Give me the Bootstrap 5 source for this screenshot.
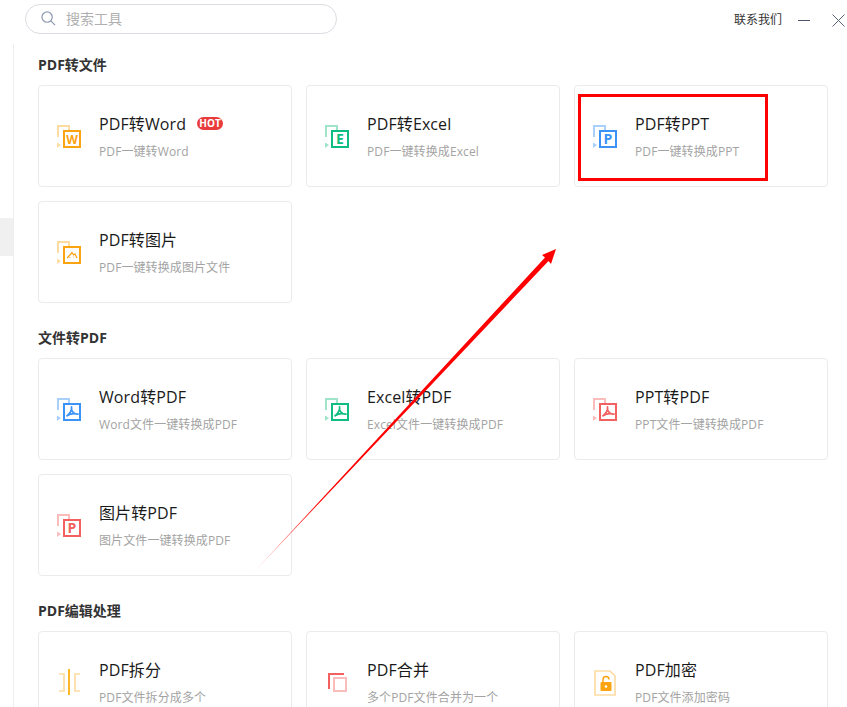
<!DOCTYPE html>
<html lang="zh-CN">
<head>
<meta charset="utf-8">
<title>PDF工具</title>
<link href="https://cdn.jsdelivr.net/npm/bootstrap@5.3.0/dist/css/bootstrap.min.css" rel="stylesheet">
<style>
html,body{height:707px;overflow:hidden;background:#fff}
body{font-family:"Open Sans","Noto Sans CJK SC",sans-serif;color:#222;position:relative}
.top-bar{height:44px;padding:4px 2px 0 25px}
.search-pill{width:312px;height:30px;border:1px solid #dcdce2;border-radius:15px;padding:0 0 1px 15px;gap:10px;color:#b0b0b0;font-size:14px}
.contact-link{font-size:12px;color:#333;margin-right:16px;line-height:16px}
.win-btn{display:block}
.win-min{margin-right:22px}
.side-rail{width:14px;border-right:1px solid #eee;padding-top:174px;flex:none}
.side-mark{height:38px;background:#f0f0f0}
.main-pane{padding-left:24px;min-width:0}
.group-title{font-size:14px;font-weight:700;color:#333;line-height:18px;margin:0;padding-top:12px;padding-bottom:11px}
.tool-grid{display:grid;grid-template-columns:repeat(3,254px);grid-auto-rows:102px;gap:14px;margin-bottom:14px}
.tool-card{border:1px solid #ebebeb;border-radius:4px;padding:26px 0 0 18px;gap:18px;background:#fff}
.tool-icon{flex:none;margin-top:13px;display:block;overflow:visible}
.tool-name{font-size:16px;line-height:24px;color:#1a1a1a;gap:11px;letter-spacing:.1px}
.tool-sub{font-size:12px;line-height:16px;color:#a3a3a3;margin-top:8px;white-space:nowrap;letter-spacing:.1px}
.hot-tag{background:#e93b3b;color:#fff;font-size:10px;font-weight:700;line-height:13px;height:13px;width:26px;border-radius:7px;text-align:center;margin-top:-2px;letter-spacing:0}
.red-box{position:absolute;left:578px;top:94px;width:190px;height:87px;border:3px solid #f00;pointer-events:none}
.red-arrow{position:absolute;left:0;top:0;pointer-events:none}
</style>
</head>
<body>
<svg width="0" height="0" class="position-absolute">
<defs>
<g id="pdf-mark" fill="none" stroke-width="1.700" stroke-linecap="round" stroke-linejoin="round">
<path d="M14.500 8.800c-.4 2.400.5 4.200 1.700 5.600 1.300 1.500 3 2 4.800 1.800M14.500 8.800c.6 3-1.500 6.400-4.500 9M10 17.800c3-2 6.500-2.800 11-1.600"/>
</g>
</defs>
</svg>

<div class="top-bar d-flex align-items-start justify-content-between">
  <div class="search-pill d-flex align-items-center">
    <svg width="15" height="15" viewBox="0 0 16 16" fill="none" stroke="#8f9bb3" stroke-width="1.300"><circle cx="6.500" cy="6.500" r="5.500"/><path d="M10.500 10.500l4.500 4.500"/></svg>
    <span>搜索工具</span>
  </div>
  <div class="d-flex align-items-center pt-1 mt-1">
    <span class="contact-link">联系我们</span>
    <svg class="win-btn win-min" width="12" height="12" viewBox="0 0 12 12"><path d="M0 6.500h12" stroke="#4a5468" stroke-width="1"/></svg>
    <svg class="win-btn" width="13" height="13" viewBox="0 0 13 13" fill="none" stroke="#5a6478"><path d="M.5.500l12 12M12.500.500l-12 12"/></svg>
  </div>
</div>

<div class="d-flex">
  <div class="side-rail"><div class="side-mark"></div></div>
  <div class="main-pane flex-grow-1">

    <h6 class="group-title">PDF转文件</h6>
    <div class="tool-grid">
      <div class="tool-card d-flex">
        <svg class="tool-icon" width="24" height="24" viewBox="0 0 24 24" fill="none"><path d="M1 12V1h11v5" stroke="#fddca3" stroke-width="2"/><path d="M0 17.500l4 2.500-4 3z" fill="#fddca3"/><rect x="7" y="6" width="16" height="16" fill="#fff" stroke="#fca311" stroke-width="2"/><text x="15" y="18.500" text-anchor="middle" font-size="12" font-weight="700" fill="#fca311">W</text></svg>
        <div><div class="tool-name d-flex align-items-center">PDF转Word<span class="hot-tag">HOT</span></div><div class="tool-sub">PDF一键转Word</div></div>
      </div>
      <div class="tool-card d-flex">
        <svg class="tool-icon" width="24" height="24" viewBox="0 0 24 24" fill="none"><path d="M1 12V1h11v5" stroke="#9fe3c8" stroke-width="2"/><path d="M0 17.500l4 2.500-4 3z" fill="#9fe3c8"/><rect x="7" y="6" width="16" height="16" fill="#fff" stroke="#10bd80" stroke-width="2"/><text x="15" y="19" text-anchor="middle" font-size="14" font-weight="700" fill="#10bd80">E</text></svg>
        <div><div class="tool-name">PDF转Excel</div><div class="tool-sub">PDF一键转换成Excel</div></div>
      </div>
      <div class="tool-card d-flex">
        <svg class="tool-icon" width="24" height="24" viewBox="0 0 24 24" fill="none"><path d="M1 12V1h11v5" stroke="#a9cffb" stroke-width="2"/><path d="M0 17.500l4 2.500-4 3z" fill="#a9cffb"/><rect x="7" y="6" width="16" height="16" fill="#fff" stroke="#3b93f7" stroke-width="2"/><text x="15" y="19" text-anchor="middle" font-size="14" font-weight="700" fill="#3b93f7">P</text></svg>
        <div><div class="tool-name">PDF转PPT</div><div class="tool-sub">PDF一键转换成PPT</div></div>
      </div>
      <div class="tool-card d-flex">
        <svg class="tool-icon" width="24" height="24" viewBox="0 0 24 24" fill="none"><path d="M1 12V1h11v5" stroke="#fddca3" stroke-width="2"/><path d="M0 17.500l4 2.500-4 3z" fill="#fddca3"/><rect x="7" y="6" width="16" height="16" fill="#fff" stroke="#fca311" stroke-width="2"/><path d="M10 17l2.500-2.500 2.500-3 1.500 2.500 1.500-1 2 4" stroke="#fca311" stroke-width="1.200"/><path d="M12 16.500h1.500M16 16h1" stroke="#fdc877" stroke-width="1"/></svg>
        <div><div class="tool-name">PDF转图片</div><div class="tool-sub">PDF一键转换成图片文件</div></div>
      </div>
    </div>

    <h6 class="group-title">文件转PDF</h6>
    <div class="tool-grid">
      <div class="tool-card d-flex">
        <svg class="tool-icon" width="24" height="24" viewBox="0 0 24 24" fill="none"><path d="M1 12V1h11v5" stroke="#a9cffb" stroke-width="2"/><path d="M0 17.500l4 2.500-4 3z" fill="#a9cffb"/><rect x="7" y="6" width="16" height="16" fill="#fff" stroke="#3b93f7" stroke-width="2"/><use href="#pdf-mark" stroke="#3b93f7"/></svg>
        <div><div class="tool-name">Word转PDF</div><div class="tool-sub">Word文件一键转换成PDF</div></div>
      </div>
      <div class="tool-card d-flex">
        <svg class="tool-icon" width="24" height="24" viewBox="0 0 24 24" fill="none"><path d="M1 12V1h11v5" stroke="#9fe3c8" stroke-width="2"/><path d="M0 17.500l4 2.500-4 3z" fill="#9fe3c8"/><rect x="7" y="6" width="16" height="16" fill="#fff" stroke="#10bd80" stroke-width="2"/><use href="#pdf-mark" stroke="#10bd80"/></svg>
        <div><div class="tool-name">Excel转PDF</div><div class="tool-sub">Excel文件一键转换成PDF</div></div>
      </div>
      <div class="tool-card d-flex">
        <svg class="tool-icon" width="24" height="24" viewBox="0 0 24 24" fill="none"><path d="M1 12V1h11v5" stroke="#fbbcbc" stroke-width="2"/><path d="M0 17.500l4 2.500-4 3z" fill="#fbbcbc"/><rect x="7" y="6" width="16" height="16" fill="#fff" stroke="#f26060" stroke-width="2"/><use href="#pdf-mark" stroke="#f26060"/></svg>
        <div><div class="tool-name">PPT转PDF</div><div class="tool-sub">PPT文件一键转换成PDF</div></div>
      </div>
      <div class="tool-card d-flex">
        <svg class="tool-icon" width="24" height="24" viewBox="0 0 24 24" fill="none"><path d="M1 12V1h11v5" stroke="#fbbcbc" stroke-width="2"/><path d="M0 17.500l4 2.500-4 3z" fill="#fbbcbc"/><rect x="7" y="6" width="16" height="16" fill="#fff" stroke="#f26060" stroke-width="2"/><text x="15" y="19" text-anchor="middle" font-size="14" font-weight="700" fill="#f26060">P</text></svg>
        <div><div class="tool-name">图片转PDF</div><div class="tool-sub">图片文件一键转换成PDF</div></div>
      </div>
    </div>

    <h6 class="group-title">PDF编辑处理</h6>
    <div class="tool-grid">
      <div class="tool-card d-flex">
        <svg class="tool-icon" width="24" height="24" viewBox="0 0 24 24" fill="none"><path d="M2 3h5v17H2M23 3h-5v17h5" stroke="#fddca3" stroke-width="1.700"/><path d="M12 -2v26" stroke="#fcb011" stroke-width="1.800"/></svg>
        <div><div class="tool-name">PDF拆分</div><div class="tool-sub">PDF文件拆分成多个</div></div>
      </div>
      <div class="tool-card d-flex">
        <svg class="tool-icon" width="24" height="24" viewBox="0 0 24 24" fill="none"><path d="M4 18V3h15" stroke="#f26060" stroke-width="2"/><rect x="9" y="7" width="12" height="13" stroke="#fbbcbc" stroke-width="2"/></svg>
        <div><div class="tool-name">PDF合并</div><div class="tool-sub">多个PDF文件合并为一个</div></div>
      </div>
      <div class="tool-card d-flex">
        <svg class="tool-icon" width="24" height="24" viewBox="0 0 24 24" fill="none"><path d="M2 0h15l5 5v19H2z" stroke="#fddca3" stroke-width="1.700"/><rect x="7.500" y="11" width="11" height="9" rx="1" fill="#fca311"/><path d="M10 11V8.500a3 3 0 0 1 6 0" stroke="#fca311" stroke-width="1.500"/><circle cx="13" cy="15.500" r="1.300" fill="#fff"/></svg>
        <div><div class="tool-name">PDF加密</div><div class="tool-sub">PDF文件添加密码</div></div>
      </div>
    </div>

  </div>
</div>

<div class="red-box"></div>
<svg class="red-arrow" width="847" height="707" viewBox="0 0 847 707">
  <defs><linearGradient id="arrow-fade" gradientUnits="userSpaceOnUse" x1="254" y1="572" x2="320" y2="500"><stop offset="0" stop-color="#f00" stop-opacity=".35"/><stop offset="1" stop-color="#f00"/></linearGradient></defs>
  <polygon points="254,572 545,257.500 542,255 556,249 551,264 548.500,261" fill="url(#arrow-fade)"/>
</svg>
<script src="https://cdn.jsdelivr.net/npm/bootstrap@5.3.0/dist/js/bootstrap.bundle.min.js"></script>
</body>
</html>
